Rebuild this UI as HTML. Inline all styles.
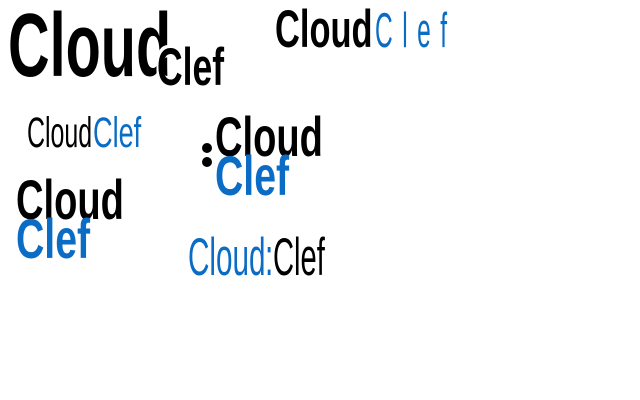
<!DOCTYPE html>
<html><head><meta charset="utf-8"><style>
html,body{margin:0;padding:0;background:#fff;width:640px;height:400px;overflow:hidden;position:relative}
.t{position:absolute;white-space:nowrap;font-family:"Liberation Sans",sans-serif;line-height:1;transform-origin:0 0;color:#000}
.b{font-weight:bold}
.bl{color:#0a6cc4}
.dot{position:absolute;width:10px;height:10px;border-radius:50%;background:#000}
</style></head><body>
<div class="t b" style="left:8px;top:1px;font-size:90px;transform:scaleX(0.64)">Cloud</div>
<div class="t b" style="left:157px;top:41px;font-size:53px;transform:scaleX(0.67);text-shadow:-3px 0 0 #fff,-3px -3px 0 #fff,-3px 3px 0 #fff">Clef</div>

<div class="t b" style="left:275px;top:3px;font-size:53px;transform:scaleX(0.65)">Cloud</div>
<div class="t bl" style="left:375px;top:6.5px;font-size:49px;transform:scaleX(0.5);letter-spacing:19px">Clef</div>

<div class="t" style="left:27px;top:111.6px;font-size:43px;transform:scaleX(0.58)">Cloud</div>
<div class="t bl" style="left:93px;top:111.6px;font-size:43px;transform:scaleX(0.63)">Clef</div>

<div class="dot" style="left:202px;top:143px"></div>
<div class="dot" style="left:202px;top:157px"></div>
<div class="t b" style="left:215px;top:108.6px;font-size:56px;transform:scaleX(0.68)">Cloud</div>
<div class="t b bl" style="left:215px;top:147.6px;font-size:56px;transform:scaleX(0.70)">Clef</div>

<div class="t b" style="left:16px;top:171.6px;font-size:56px;transform:scaleX(0.68)">Cloud</div>
<div class="t b bl" style="left:16px;top:210.6px;font-size:56px;transform:scaleX(0.70)">Clef</div>

<div class="t bl" style="left:188px;top:231px;font-size:53px;transform:scaleX(0.56)">Cloud</div>
<div class="t bl" style="left:265px;top:231px;font-size:53px;transform:scaleX(0.56)">:</div>
<div class="t" style="left:273px;top:231px;font-size:53px;transform:scaleX(0.55)">Clef</div>
</body></html>
